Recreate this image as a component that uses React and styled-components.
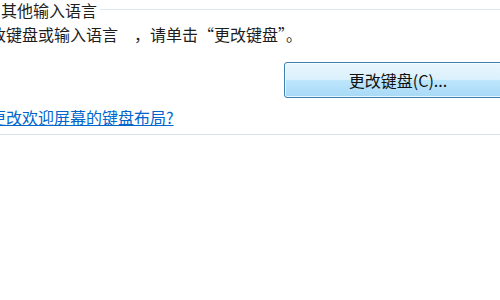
import React from "react";
import styled, { createGlobalStyle } from "styled-components";

const GlobalStyle = createGlobalStyle`
  html, body {
    margin: 0;
    padding: 0;
    background: #ffffff;
    overflow: hidden;
  }
  body {
    font-family: "Noto Sans CJK SC", "Noto Sans", sans-serif;
    color: #1e1e1e;
  }
`;

const Page = styled.div`
  width: 500px;
  height: 300px;
  overflow: hidden;
  background: #ffffff;
`;

// the dialog is cropped on its left side, so the column starts off-screen
const Content = styled.div`
  margin-left: -42px;
  display: flex;
  flex-direction: column;
`;

const GroupHeader = styled.div`
  display: flex;
  align-items: center;
  gap: 3px;
  margin-left: -5px;
  height: 20px;
`;

const GroupTitle = styled.span`
  font-size: 16px;
  line-height: 20px;
  white-space: nowrap;
  color: #1e1e1e;
`;

const Rule = styled.div`
  flex: 1;
  height: 1px;
  margin-top: -2px;
  background: #dfe6ed;
`;

const Text = styled.p`
  margin: 4px 0 0 0;
  font-size: 16px;
  line-height: 20px;
  white-space: nowrap;
`;

const Comma = styled.span`
  margin: 0 0 0 16px;
`;

const ButtonRow = styled.div`
  display: flex;
  margin-top: 18px;
  padding-left: 326px;
`;

const Button = styled.button`
  flex: none;
  width: 228px;
  height: 36px;
  border: 1px solid #3c7fb1;
  border-radius: 3px;
  box-shadow: inset 0 0 0 1px rgba(255, 255, 255, 0.75);
  background: linear-gradient(
    to bottom,
    #eaf6fd 0%,
    #d9f0fc 50%,
    #bee6fd 51%,
    #a7d9f5 100%
  );
  font-family: "Noto Sans CJK SC", "Noto Sans", sans-serif;
  font-size: 16px;
  color: #111111;
  padding: 0;
`;

const Link = styled.a`
  margin-top: 9px;
  font-size: 16px;
  line-height: 20px;
  color: #0066cc;
  text-decoration: underline;
  white-space: nowrap;
`;

const Separator = styled.div`
  margin-top: 7px;
  margin-left: 42px;
  height: 1px;
  background: #d8e1e8;
`;

export default function App() {
  return (
    <Page>
      <GlobalStyle />
      <Content>
        <GroupHeader>
          <GroupTitle>键盘和其他输入语言</GroupTitle>
          <Rule />
        </GroupHeader>
        <Text>
          要更改键盘或输入语言<Comma>，</Comma>请单击“更改键盘”。
        </Text>
        <ButtonRow>
          <Button>更改键盘(C)...</Button>
        </ButtonRow>
        <Link href="#">如何更改欢迎屏幕的键盘布局?</Link>
        <Separator />
      </Content>
    </Page>
  );
}
